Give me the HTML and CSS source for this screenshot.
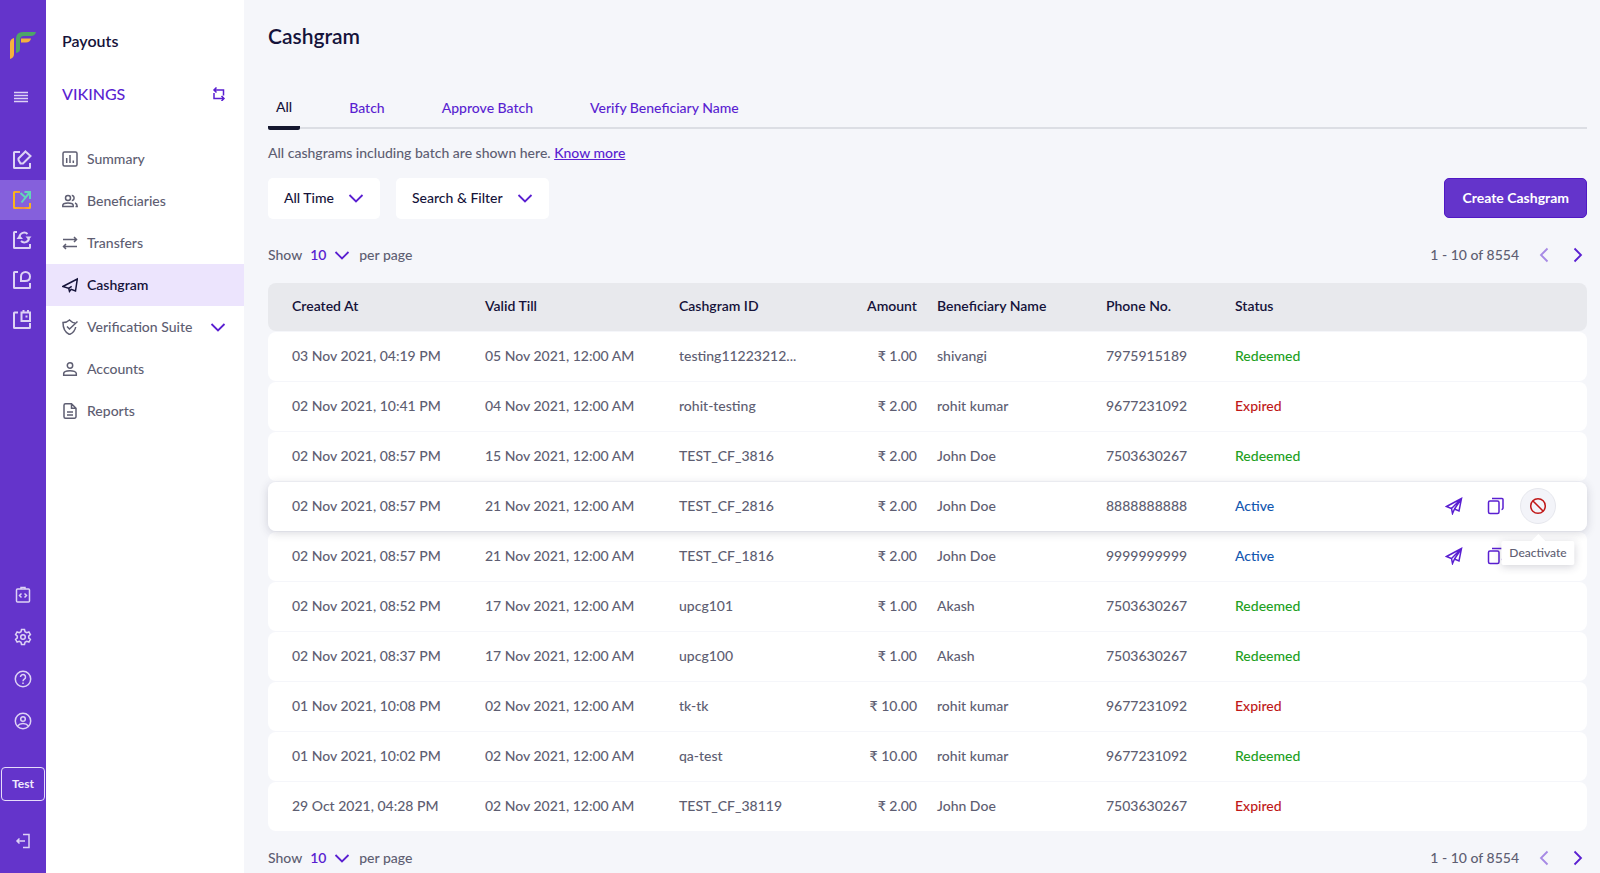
FILE: index.html
```html
<!DOCTYPE html>
<html lang="en">
<head>
    <meta charset="UTF-8">
    <meta name="viewport" content="width=device-width, initial-scale=1.0">
    <title>Cashgram - Payouts</title>
    <link rel="stylesheet" href="styles.css">
</head>
<body>
    <!-- shared icons -->
    <svg class="sprite" aria-hidden="true">
        <symbol id="i-chevron" viewBox="0 0 16 10"><path d="M1.500 2l6.500 6.500L14.500 2"/></symbol>
        <symbol id="i-send" viewBox="0 0 18 18"><path d="M1.500 9.500L16.500 1.500 14 14 9.500 12 7.500 16.500 6.500 11.500zM6.500 11.500L16.500 1.500 9.500 12"/></symbol>
        <symbol id="i-copy" viewBox="0 0 18 18"><rect x="1.500" y="4" width="10.500" height="12.500" rx="1.500"/><path d="M5 1.500h10a1 1 0 0 1 1 1V11a1.500 1.500 0 0 1-1.500 1.500"/></symbol>
        <symbol id="i-ban" viewBox="0 0 18 18"><circle cx="9" cy="9" r="7.300"/><path d="M4 4l10 10"/></symbol>
    </svg>

    <div class="app">
        <nav class="rail" aria-label="Products">
            <a class="logo" href="#" aria-label="Home">
                <svg width="28" height="28" viewBox="0 0 28 28">
                    <path fill="#f5b13d" d="M1 27V11q0-4 4-5v16q0 4-4 5z"/>
                    <path fill="#f5b13d" d="M12 6.500h10q-1 4-5 4h-5z"/>
                    <path fill="#4ea568" d="M7 21V7q0-7 7-7h13q-1 4-5 4h-7q-4 0-4 4v9q0 3.500-4 4z"/>
                </svg>
            </a>
            <button class="rail-btn menu" aria-label="Menu">
                <svg width="16" height="12" viewBox="0 0 16 12"><path d="M1 1.500h14M1 4.500h14M1 7.500h14M1 10.500h14"/></svg>
            </button>
            <div class="rail-apps">
                <a href="#" aria-label="Payment Gateway">
                    <svg width="20" height="20" viewBox="0 0 20 20"><path d="M8 2H2.500a.5.500 0 0 0-.5.500v15a.5.500 0 0 0 .5.500h15a.5.500 0 0 0 .5-.5V13"/><path d="M13.500 1.500l5 4.500-7.500 7.500H8.500L6.500 10V8.500z"/></svg>
                </a>
                <a class="active" href="#" aria-label="Payouts">
                    <svg width="20" height="20" viewBox="0 0 20 20">
                        <defs><linearGradient id="sun" x1="0" y1="0" x2="1" y2="0"><stop offset="0" stop-color="#f9b51c"/><stop offset=".6" stop-color="#f08c46"/><stop offset="1" stop-color="#f9b51c"/></linearGradient></defs>
                        <path stroke="url(#sun)" d="M8 2H2.500a.5.500 0 0 0-.5.500v15a.5.500 0 0 0 .5.500h15a.5.500 0 0 0 .5-.5V13"/>
                        <path stroke="#62d6b8" d="M12.500 2H18v7M8.500 3l5 4.500-4 5M18 2l-4.500 5.500"/>
                    </svg>
                </a>
                <a href="#" aria-label="Subscriptions">
                    <svg width="20" height="20" viewBox="0 0 20 20"><path d="M5 2H2.500a.5.500 0 0 0-.5.500v15a.5.500 0 0 0 .5.500h15a.5.500 0 0 0 .5-.5V14"/><path d="M7.500 6.500a4.700 4.500 0 0 1 8-2.500M17 8.500a4.700 4.500 0 0 1-8 2.500"/><path fill="currentColor" stroke="none" d="M4.500 9L7.500 5l3.500 4zM13.500 6.500h6l-3 3.500z"/></svg>
                </a>
                <a href="#" aria-label="Tokens">
                    <svg width="20" height="20" viewBox="0 0 20 20"><path d="M6 2H2.500a.5.500 0 0 0-.5.500v15a.5.500 0 0 0 .5.500h15a.5.500 0 0 0 .5-.5V13"/><path d="M9 11V6.500a4.500 4.500 0 0 1 9 0c0 3-2 4.500-5 4.500z"/></svg>
                </a>
                <a href="#" aria-label="Bank Accounts">
                    <svg width="20" height="20" viewBox="0 0 20 20"><path d="M6 2.500H2.500A.5.500 0 0 0 2 3v14.500a.5.500 0 0 0 .5.500h15a.5.500 0 0 0 .5-.5V13"/><path d="M9.500 2.500H18V11H9.500zM11.500 0v2.500M16 0v2.500M13.500 6.500h2"/></svg>
                </a>
            </div>
            <div class="rail-tools">
                <a href="#" aria-label="Developers">
                    <svg width="18" height="18" viewBox="0 0 18 18"><rect x="2.500" y="3" width="13" height="13" rx="1"/><path d="M7 3V1.500h4V3M7.500 7.500l-2 2 2 2M10.500 7.500l2 2-2 2"/></svg>
                </a>
                <a href="#" aria-label="Settings">
                    <svg width="18" height="18" viewBox="0 0 18 18"><circle cx="9" cy="9" r="2.300"/><path d="M7.500 1.500h3l.5 2.200 1.700 1 2.200-.7 1.500 2.600-1.700 1.500v1.800l1.700 1.500-1.500 2.600-2.200-.7-1.700 1-.5 2.200h-3L7 14.300l-1.700-1-2.200.7-1.500-2.600 1.700-1.500V8.100L1.600 6.600 3.100 4l2.200.7 1.700-1z"/></svg>
                </a>
                <a href="#" aria-label="Help">
                    <svg width="18" height="18" viewBox="0 0 18 18"><circle cx="9" cy="9" r="7.700"/><path d="M6.500 7a2.500 2.500 0 1 1 3.800 2.100C9.300 9.800 9 10.200 9 11.300M9 12.600v1.500"/></svg>
                </a>
                <a href="#" aria-label="Profile">
                    <svg width="18" height="18" viewBox="0 0 18 18"><circle cx="9" cy="9" r="7.700"/><circle cx="9" cy="7" r="2.300"/><path d="M3.500 14q2-2.500 5.500-2.500t5.500 2.500"/></svg>
                </a>
            </div>
            <button class="env">Test</button>
            <a class="logout" href="#" aria-label="Log out">
                <svg width="16" height="16" viewBox="0 0 16 16"><path d="M8 1.500h6v13H8M10 8H1.500M4.500 5.500L2 8l2.500 2.500"/></svg>
            </a>
        </nav>

        <aside class="sidebar">
            <h2>Payouts</h2>
            <div class="account">
                <span>VIKINGS</span>
                <button aria-label="Switch account">
                    <svg width="14" height="14" viewBox="0 0 14 14"><path d="M1.500 3h10v5.500M4.500.5L2 3l2.500 2.500M2 6v5.500h10M9.500 9l2.500 2.500L9.500 14"/></svg>
                </button>
            </div>
            <nav class="menu-list" aria-label="Payouts">
                <a href="#"><svg width="16" height="16" viewBox="0 0 16 16"><rect x="1" y="1" width="14" height="14" rx="1.500"/><path d="M4.700 7v5M8 4v8M11.300 9.500V12"/></svg>Summary</a>
                <a href="#"><svg width="16" height="16" viewBox="0 0 16 16"><circle cx="6" cy="5" r="2.500"/><path d="M.8 13.500v-1.200c0-3.200 10.400-3.200 10.400 0v1.200zM9.800 2.500c3-.3 3 5.200 0 5M13 10c1.500.6 2.200 1.300 2.200 3.500h-1.700"/></svg>Beneficiaries</a>
                <a href="#"><svg width="16" height="16" viewBox="0 0 16 16"><path d="M1 4.500h13.500M12 2l2.500 2.500L12 7M15 11.500H1.500M4 9l-2.500 2.500L4 14"/></svg>Transfers</a>
                <a class="active" href="#" aria-current="page"><svg width="16" height="16" viewBox="0 0 16 16"><path d="M.8 9.500L15.300 2 13.500 14l-4.300-1.700-1.700 2-.8-3zM6.700 11.300l3-2"/></svg>Cashgram</a>
                <a href="#"><svg width="16" height="16" viewBox="0 0 16 16"><path d="M13 4c-2 0-4-1.500-5.500-3C6 2.500 3.500 3.500 1 3.500c0 5.500 1 9.500 6.500 12 4-1.800 5.700-4.500 6.200-7.500M5 7.500l2.500 2.500L15.500 2.500"/></svg>Verification Suite<svg class="chev" width="16" height="10"><use href="#i-chevron"/></svg></a>
                <a href="#"><svg width="16" height="16" viewBox="0 0 16 16"><circle cx="8" cy="4.500" r="2.700"/><path d="M1.700 14.200v-1.700c0-3.700 12.600-3.700 12.600 0v1.700z"/></svg>Accounts</a>
                <a href="#"><svg width="16" height="16" viewBox="0 0 16 16"><path d="M3.500.8h6L14 5.200v8.500a1.500 1.500 0 0 1-1.500 1.500h-9A1.500 1.500 0 0 1 2 13.700V2.300A1.500 1.500 0 0 1 3.500.8zM9.500.8v4.400H14M5 9h6M5 12h6"/></svg>Reports</a>
            </nav>
        </aside>

        <main class="content">
            <h1>Cashgram</h1>
            <nav class="tabs" aria-label="Cashgram views">
                <a class="active" href="#">All</a>
                <a href="#">Batch</a>
                <a href="#">Approve Batch</a>
                <a href="#">Verify Beneficiary Name</a>
            </nav>
            <p class="hint">All cashgrams including batch are shown here. <a href="#">Know more</a></p>

            <div class="toolbar">
                <button class="filter" aria-haspopup="true">All Time <svg class="chev" width="16" height="10"><use href="#i-chevron"/></svg></button>
                <button class="filter" aria-haspopup="true">Search &amp; Filter <svg class="chev" width="16" height="10"><use href="#i-chevron"/></svg></button>
                <button class="primary">Create Cashgram</button>
            </div>

            <div class="pager">
                <label for="size-top">Show</label>
                <span class="page-size">
                    <select id="size-top"><option>10</option><option>25</option><option>50</option></select>
                    <svg class="chev" width="16" height="10"><use href="#i-chevron"/></svg>
                </span>
                <span>per page</span>
                <span class="range">1 - 10 of 8554</span>
                <button class="prev" aria-label="Previous page" disabled><svg width="10" height="16" viewBox="0 0 10 16"><path d="M8.500 1.500L2 8l6.500 6.500"/></svg></button>
                <button class="next" aria-label="Next page"><svg width="10" height="16" viewBox="0 0 10 16"><path d="M1.500 1.500L8 8l-6.500 6.500"/></svg></button>
            </div>

            <table class="grid">
                <colgroup>
                    <col class="c-created"><col class="c-valid"><col class="c-id"><col class="c-amount"><col class="c-name"><col class="c-phone"><col class="c-status"><col>
                </colgroup>
                <thead>
                    <tr><th>Created At</th><th>Valid Till</th><th>Cashgram ID</th><th class="amount">Amount</th><th>Beneficiary Name</th><th>Phone No.</th><th>Status</th><th></th></tr>
                </thead>
                <tbody>
                    <tr><td>03 Nov 2021, 04:19 PM</td><td>05 Nov 2021, 12:00 AM</td><td>testing11223212...</td><td class="amount">₹ 1.00</td><td>shivangi</td><td>7975915189</td><td class="redeemed">Redeemed</td><td></td></tr>
                    <tr><td>02 Nov 2021, 10:41 PM</td><td>04 Nov 2021, 12:00 AM</td><td>rohit-testing</td><td class="amount">₹ 2.00</td><td>rohit kumar</td><td>9677231092</td><td class="expired">Expired</td><td></td></tr>
                    <tr><td>02 Nov 2021, 08:57 PM</td><td>15 Nov 2021, 12:00 AM</td><td>TEST_CF_3816</td><td class="amount">₹ 2.00</td><td>John Doe</td><td>7503630267</td><td class="redeemed">Redeemed</td><td></td></tr>
                    <tr class="hovered"><td>02 Nov 2021, 08:57 PM</td><td>21 Nov 2021, 12:00 AM</td><td>TEST_CF_2816</td><td class="amount">₹ 2.00</td><td>John Doe</td><td>8888888888</td><td class="active">Active</td>
                        <td>
                            <div class="actions">
                                <button aria-label="Send"><svg width="18" height="18"><use href="#i-send"/></svg></button>
                                <button aria-label="Copy"><svg width="18" height="18"><use href="#i-copy"/></svg></button>
                                <button class="ban current" aria-describedby="tip"><svg width="18" height="18"><use href="#i-ban"/></svg><span class="tooltip" id="tip" role="tooltip">Deactivate</span></button>
                            </div>
                        </td>
                    </tr>
                    <tr><td>02 Nov 2021, 08:57 PM</td><td>21 Nov 2021, 12:00 AM</td><td>TEST_CF_1816</td><td class="amount">₹ 2.00</td><td>John Doe</td><td>9999999999</td><td class="active">Active</td>
                        <td>
                            <div class="actions">
                                <button aria-label="Send"><svg width="18" height="18"><use href="#i-send"/></svg></button>
                                <button aria-label="Copy"><svg width="18" height="18"><use href="#i-copy"/></svg></button>
                                <button class="ban" aria-label="Deactivate"><svg width="18" height="18"><use href="#i-ban"/></svg></button>
                            </div>
                        </td>
                    </tr>
                    <tr><td>02 Nov 2021, 08:52 PM</td><td>17 Nov 2021, 12:00 AM</td><td>upcg101</td><td class="amount">₹ 1.00</td><td>Akash</td><td>7503630267</td><td class="redeemed">Redeemed</td><td></td></tr>
                    <tr><td>02 Nov 2021, 08:37 PM</td><td>17 Nov 2021, 12:00 AM</td><td>upcg100</td><td class="amount">₹ 1.00</td><td>Akash</td><td>7503630267</td><td class="redeemed">Redeemed</td><td></td></tr>
                    <tr><td>01 Nov 2021, 10:08 PM</td><td>02 Nov 2021, 12:00 AM</td><td>tk-tk</td><td class="amount">₹ 10.00</td><td>rohit kumar</td><td>9677231092</td><td class="expired">Expired</td><td></td></tr>
                    <tr><td>01 Nov 2021, 10:02 PM</td><td>02 Nov 2021, 12:00 AM</td><td>qa-test</td><td class="amount">₹ 10.00</td><td>rohit kumar</td><td>9677231092</td><td class="redeemed">Redeemed</td><td></td></tr>
                    <tr><td>29 Oct 2021, 04:28 PM</td><td>02 Nov 2021, 12:00 AM</td><td>TEST_CF_38119</td><td class="amount">₹ 2.00</td><td>John Doe</td><td>7503630267</td><td class="expired">Expired</td><td></td></tr>
                </tbody>
            </table>

            <div class="pager bottom">
                <label for="size-bottom">Show</label>
                <span class="page-size">
                    <select id="size-bottom"><option>10</option><option>25</option><option>50</option></select>
                    <svg class="chev" width="16" height="10"><use href="#i-chevron"/></svg>
                </span>
                <span>per page</span>
                <span class="range">1 - 10 of 8554</span>
                <button class="prev" aria-label="Previous page" disabled><svg width="10" height="16" viewBox="0 0 10 16"><path d="M8.500 1.500L2 8l6.500 6.500"/></svg></button>
                <button class="next" aria-label="Next page"><svg width="10" height="16" viewBox="0 0 10 16"><path d="M1.500 1.500L8 8l-6.500 6.500"/></svg></button>
            </div>
        </main>
    </div>
</body>
</html>
```
FILE: styles.css
```css
* {
    box-sizing: border-box;
}
body {
    margin: 0;
    font-family: Lato, "Open Sans", sans-serif;
    font-size: 14px;
    font-weight: 500;
    line-height: 20px;
    color: #5e5e72;
    background: #f5f6fa;
}
a {
    color: inherit;
    text-decoration: none;
}
button,
select {
    margin: 0;
    padding: 0;
    border: none;
    background: none;
    font: inherit;
    color: inherit;
    cursor: pointer;
}
svg {
    display: block;
    flex-shrink: 0;
    fill: none;
    stroke: currentColor;
    stroke-width: 1.5;
}
.sprite {
    position: absolute;
    width: 0;
    height: 0;
}
.chev {
    color: #5a1fd1;
    stroke-width: 1.8;
}
.app {
    display: flex;
    min-height: 100vh;
}

/* purple product rail */
.rail {
    width: 46px;
    flex-shrink: 0;
    display: flex;
    flex-direction: column;
    align-items: center;
    padding: 32px 0 24px;
    background: #6434cb;
    color: #ddd2f5;
}
.logo svg {
    stroke: none;
}
.rail-btn {
    margin: 30px 4px 36px 0;
    padding: 1px 0;
}
.rail-apps {
    width: 100%;
}
.rail-apps a {
    display: flex;
    align-items: center;
    height: 40px;
    padding: 0 0 1px 12px;
}
.rail-apps svg {
    stroke-width: 2;
}
.rail-apps .active {
    background: #8560dc;
}
.rail-tools {
    margin-top: auto;
}
.rail-tools a {
    display: flex;
    align-items: center;
    height: 42px;
}
.env {
    width: 44px;
    height: 34px;
    margin: 25px 0 32px;
    border: 1px solid #e6dcfa;
    border-radius: 4px;
    font-size: 12px;
    font-weight: 700;
    color: #f0eafc;
}

/* section menu */
.sidebar {
    width: 198px;
    flex-shrink: 0;
    padding-top: 31px;
    background: #fff;
}
.sidebar h2 {
    margin: 0 16px;
    font-size: 16px;
    font-weight: 600;
    color: #15133a;
}
.account {
    display: flex;
    justify-content: space-between;
    align-items: center;
    margin: 33px 18px 34px 16px;
    font-size: 16px;
    color: #5a1fd1;
}
.menu-list a {
    display: flex;
    align-items: center;
    gap: 9px;
    height: 42px;
    padding: 0 18px 0 16px;
}
.menu-list .active {
    background: #ece4fd;
    color: #15133a;
    font-weight: 600;
}
.menu-list .chev {
    margin-left: auto;
}

/* main area */
.content {
    flex: 1;
    min-width: 0;
    padding: 23px 13px 0 24px;
}
h1 {
    margin: 0;
    font-size: 21px;
    line-height: 26px;
    font-weight: 600;
    color: #15133a;
}
.tabs {
    display: flex;
    gap: 41px;
    margin-top: 43px;
    border-bottom: 2px solid #dcdee4;
    color: #5a1fd1;
}
.tabs a {
    height: 35px;
    padding: 6px 8px 0;
}
.tabs .active {
    height: 38px;
    margin-bottom: -3px;
    padding-top: 5px;
    border-bottom: 4px solid #15182f;
    border-radius: 2px;
    color: #15133a;
}
.hint {
    margin: 14px 0 15px;
}
.hint a {
    color: #5a1fd1;
    text-decoration: underline;
}
.toolbar {
    display: flex;
    gap: 16px;
}
.filter {
    display: flex;
    align-items: center;
    gap: 14px;
    height: 41px;
    padding: 0 16px 1px;
    border-radius: 5px;
    background: #fff;
    color: #15133a;
}
.primary {
    height: 40px;
    margin-left: auto;
    padding: 0 17px;
    border: 1px solid #5018c4;
    border-radius: 5px;
    background: #6434cb;
    color: #fff;
    font-weight: 700;
}
.pager {
    display: flex;
    align-items: center;
    height: 20px;
    margin: 26px 0 17px;
}
.page-size {
    display: grid;
    align-items: center;
    width: 40px;
    margin: 0 9px 0 8px;
    color: #5a1fd1;
}
.page-size select,
.page-size .chev {
    grid-area: 1 / 1;
}
.page-size select {
    appearance: none;
    width: 100%;
    font-weight: 600;
}
.page-size .chev {
    justify-self: end;
    pointer-events: none;
}
.pager .range {
    margin-left: auto;
}
.pager button {
    color: #5a1fd1;
}
.pager svg {
    stroke-width: 1.8;
}
.pager .prev {
    margin: 0 24px 0 20px;
    opacity: 0.5;
}
.pager .next {
    margin-right: 4px;
}
.pager.bottom {
    margin: 16px 0 0;
}

/* table */
.grid {
    width: 100%;
    table-layout: fixed;
    border-collapse: separate;
    border-spacing: 0 1px;
}
.c-created { width: 217px; }
.c-valid { width: 194px; }
.c-id { width: 158px; }
.c-amount { width: 80px; }
.c-name { width: 189px; }
.c-phone { width: 129px; }
.c-status { width: 130px; }
.grid th,
.grid td {
    height: 49px;
    padding: 0 0 2px;
    text-align: left;
    white-space: nowrap;
}
.grid th {
    height: 48px;
    background: #e8e9ed;
    color: #15133a;
    font-weight: 600;
}
.grid td {
    background: #fff;
}
.grid th:first-child,
.grid td:first-child {
    padding-left: 24px;
    border-radius: 8px 0 0 8px;
}
.grid th:last-child,
.grid td:last-child {
    padding-right: 31px;
    border-radius: 0 8px 8px 0;
}
.grid .amount {
    text-align: right;
}
.grid .amount + * {
    padding-left: 20px;
}
.grid .redeemed { color: #22a022; }
.grid .expired { color: #c01818; }
.grid td.active { color: #1257b0; }
.hovered {
    position: relative;
    z-index: 1;
    border-radius: 8px;
    box-shadow: 0 2px 10px rgba(40, 40, 70, 0.18);
}
.actions {
    display: flex;
    justify-content: flex-end;
    gap: 6px;
}
.actions button {
    display: grid;
    place-items: center;
    width: 36px;
    height: 36px;
    color: #5a1fd1;
}
.actions .ban {
    color: #c01818;
}
.actions .current {
    position: relative;
    border: 1px solid #e6e7ed;
    border-radius: 50%;
    background: #f3f4f9;
}
.tooltip {
    position: absolute;
    top: 52px;
    left: 50%;
    transform: translateX(-50%);
    padding: 2px 8px;
    border-radius: 2px;
    background: #fff;
    box-shadow: 0 2px 8px rgba(40, 40, 70, 0.2);
    font-size: 12px;
    color: #5e5e72;
}
.tooltip::before {
    content: "";
    position: absolute;
    top: -7px;
    left: 50%;
    margin-left: -7px;
    border: 7px solid transparent;
    border-top: none;
    border-bottom-color: #fff;
}
```
